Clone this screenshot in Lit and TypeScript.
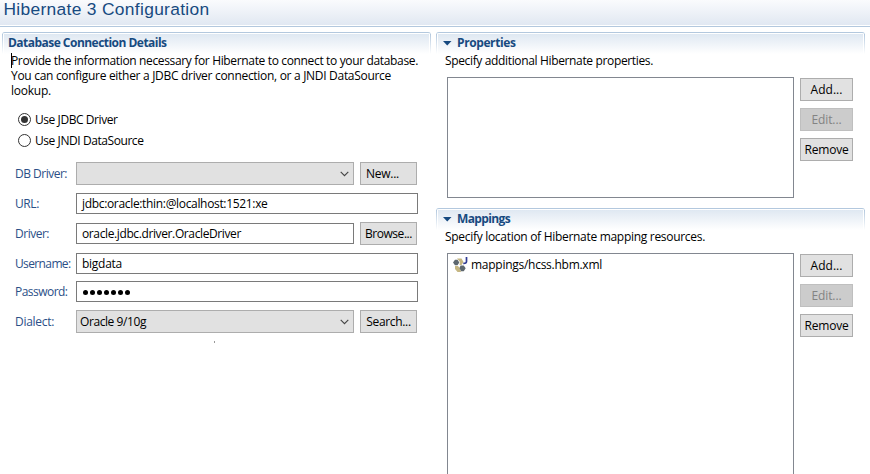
import { LitElement, html, css, nothing } from "lit";
import { customElement, property } from "lit/decorators.js";

/** A single line of text, tracked so that it fills the given width. */
@customElement("fit-text")
class FitText extends LitElement {
  @property({ type: Number }) w = 0;
  @property() text = "";
  static styles = css`
    :host { display: block; white-space: pre; height: 16px; line-height: 16px; flex: none; }
    .t { display: inline-block; vertical-align: top; }
  `;
  render() {
    return html`<span class="t">${this.text}</span>`;
  }
  updated() {
    const span = this.renderRoot.querySelector(".t") as HTMLElement;
    span.style.letterSpacing = "0px";
    const natural = span.getBoundingClientRect().width;
    if (this.w) span.style.letterSpacing = (this.w - natural) / this.text.length + "px";
  }
}

@customElement("push-button")
class PushButton extends LitElement {
  @property() label = "";
  @property({ type: Number }) w = 0;
  @property({ type: Boolean, reflect: true }) disabled = false;
  static styles = css`
    :host { display: flex; justify-content: center; box-sizing: border-box; height: 23px; padding-top: 3px; border: 1px solid #adadad; background: #e1e1e1; color: #000; }
    :host([disabled]) { border-color: #bfbfbf; background: #ccc; color: #838383; }
  `;
  render() {
    return html`<fit-text .text=${this.label} .w=${this.w}></fit-text>`;
  }
}

@customElement("form-section")
class FormSection extends LitElement {
  @property() heading = "";
  @property({ type: Number }) w = 0;
  @property({ type: Boolean }) twistie = false;
  static styles = css`
    :host { display: block; }
    .bar { display: flex; box-sizing: border-box; height: 22px; padding: 2px 0 0 6px; position: relative; border-top: 1px solid #b3c8de; border-radius: 3px 3px 0 0; background: linear-gradient(#fff 0 1px, #dfe8f2 1px, #fff 21px); color: #174a80; font-weight: bold; }
    .bar::before, .bar::after { content: ""; width: 2px; position: absolute; top: 1px; bottom: 0; }
    .bar::before { left: 0; background: linear-gradient(#b3c8de, #fff) 0 0 / 1px 100% no-repeat, #fff; }
    .bar::after { right: 0; background: linear-gradient(#b3c8de, #fff) 1px 0 / 1px 100% no-repeat, #fff; }
    .arrow { width: 9px; height: 5px; margin: 6px 5px 0 1px; fill: #174a80; }
  `;
  render() {
    return html`<div class="bar">
        ${this.twistie ? html`<svg class="arrow" viewBox="0 0 9 5"><path d="M0 0h8.5L4.25 4.5z" /></svg>` : nothing}
        <fit-text .text=${this.heading} .w=${this.w}></fit-text>
      </div>
      <slot></slot>`;
  }
}

const chevron = html`<svg class="chev" viewBox="0 0 9 6"><path d="M.7 .8L4.5 4.6L8.3 .8" /></svg>`;

@customElement("app-root")
class AppRoot extends LitElement {
  static styles = css`
    :host { display: block; height: 474px; overflow: hidden; background: #fff; color: #000; font: 12px "Open Sans", "Noto Sans", sans-serif; }
    .head { box-sizing: border-box; height: 27px; padding: 1px 0 0 3.5px; border-bottom: 1px solid #b3c8de; background: linear-gradient(#fafbfd, #e1e8f2 25px, #fff 25px); color: #174a80; font: 17.4px "Liberation Sans", Arial, sans-serif; }
    .head fit-text { line-height: 17px; height: 17px; }
    .cols { display: grid; grid-template-columns: 429px 429px; column-gap: 5px; padding: 5px 0 0 2px; }
    .desc { padding: 0 0 0 9px; margin-top: -1px; position: relative; }
    .desc fit-text { height: 15px; line-height: 15px; }
    .caret { position: absolute; left: 9px; top: 0; width: 1px; height: 15px; background: #000; }
    .radios { padding: 13px 0 0 16px; }
    .radio { display: flex; height: 21px; gap: 4px; }
    .radio svg { width: 13px; height: 13px; margin-top: 2px; }
    .radio fit-text { margin-top: 1px; }
    .radio svg svg { margin: 0; }
    .ring { fill: #fff; stroke: #333; }
    .dot { fill: #333; }
    .form { display: grid; grid-template-columns: 61px 278px 63px; column-gap: 0; grid-template-rows: 30px 30px 30px 29px 29px 23px; padding: 9px 0 0 13px; }
    .lbl { color: #2b4f87; padding-top: 4px; }
    .lbl.pw { padding-top: 3px; }
    .field { box-sizing: border-box; height: 21px; margin-top: 1px; padding: 2px 0 0 5px; border: 1px solid #7a7a7a; background: #fff; }
    .wide { grid-column: 2 / 4; width: 342px; }
    .pw.field { margin-top: 0; }
    .combo { display: flex; justify-content: space-between; box-sizing: border-box; height: 23px; padding: 3px 4px 0 3px; border: 1px solid #adadad; background: #e1e1e1; }
    .chev { width: 9px; height: 6px; margin-top: 5px; margin-left: auto; fill: none; stroke: #444; stroke-width: 1.1; }
    .form push-button { margin-left: 6px; width: 57px; }
    .form push-button.new { justify-content: flex-start; padding-left: 5px; }
    .bullets { display: flex; gap: 1.6px; padding: 5.5px 0 0 1px; }
    .bullets i { width: 5.4px; height: 5.4px; border-radius: 3px; background: #000; }
    .speck { width: 1px; height: 2px; margin: 8px 0 0 212px; background: #999; }
    .note { padding-left: 9px; margin-top: -1px; }
    .body { display: grid; grid-template-columns: 347px 53px; column-gap: 6px; padding: 8px 0 0 11px; }
    .list { box-sizing: border-box; height: 121px; border: 1px solid #828790; background: #fff; }
    .tall { height: 240px; }
    .btns { display: grid; gap: 7px; align-content: start; padding-top: 1px; }
    .props { height: 176px; }
    .item { display: flex; padding: 3px 0 0 5px; gap: 3px; }
    .item svg { width: 15px; height: 16px; }
  `;

  private radio(label: string, w: number, on: boolean) {
    return html`<div class="radio">
      <svg viewBox="0 0 13 13"><circle class="ring" cx="6.5" cy="6.5" r="6" />${on ? html`<svg viewBox="0 0 13 13"><circle class="dot" cx="6.5" cy="6.5" r="3.5" /></svg>` : nothing}</svg>
      <fit-text .text=${label} .w=${w}></fit-text>
    </div>`;
  }

  private label(text: string, w: number, cls = "") {
    return html`<div class="lbl ${cls}"><fit-text .text=${text} .w=${w}></fit-text></div>`;
  }

  private buttons() {
    return html`<div class="btns">
      <push-button label="Add..." w="32"></push-button>
      <push-button label="Edit..." w="30" disabled></push-button>
      <push-button label="Remove" w="44"></push-button>
    </div>`;
  }

  render() {
    return html`
      <div class="head"><fit-text text="Hibernate 3 Configuration" w="206"></fit-text></div>
      <div class="cols">
        <form-section heading="Database Connection Details" w="158.5">
          <div class="desc">
            <div class="caret"></div>
            <fit-text text="Provide the information necessary for Hibernate to connect to your database." w="407"></fit-text>
            <fit-text text="You can configure either a JDBC driver connection, or a JNDI DataSource" w="380"></fit-text>
            <fit-text text="lookup." w="40"></fit-text>
          </div>
          <div class="radios">
            ${this.radio("Use JDBC Driver", 82.5, true)} ${this.radio("Use JNDI DataSource", 108.5, false)}
          </div>
          <div class="form">
            ${this.label("DB Driver:", 52)}
            <div class="combo">${chevron}</div>
            <push-button class="new" label="New..." w="33"></push-button>
            ${this.label("URL:", 24)}
            <div class="field wide"><fit-text text="jdbc:oracle:thin:@localhost:1521:xe" w="185.5"></fit-text></div>
            ${this.label("Driver:", 34)}
            <div class="field"><fit-text text="oracle.jdbc.driver.OracleDriver" w="159"></fit-text></div>
            <push-button label="Browse..." w="47"></push-button>
            ${this.label("Username:", 55.5)}
            <div class="field wide"><fit-text text="bigdata" w="40"></fit-text></div>
            ${this.label("Password:", 52.5, "pw")}
            <div class="field wide pw"><div class="bullets">${Array.from({ length: 7 }, () => html`<i></i>`)}</div></div>
            ${this.label("Dialect:", 39)}
            <div class="combo"><fit-text text="Oracle 9/10g" w="66"></fit-text>${chevron}</div>
            <push-button label="Search..." w="44.5"></push-button>
          </div>
          <div class="speck"></div>
        </form-section>
        <div>
          <form-section class="props" heading="Properties" w="58.5" twistie>
            <div class="note"><fit-text text="Specify additional Hibernate properties." w="208"></fit-text></div>
            <div class="body"><div class="list"></div>${this.buttons()}</div>
          </form-section>
          <form-section heading="Mappings" w="53" twistie>
            <div class="note"><fit-text text="Specify location of Hibernate mapping resources." w="260"></fit-text></div>
            <div class="body">
              <div class="list tall">
                <div class="item">
                  <svg viewBox="0 0 15 16">
                    <path fill="#c5b682" d="M4 1.5h4.5l2 3.5-2 3H6.5L7 5z" />
                    <path fill="#5d676e" d="M0 5.5l2-2.7h2.5l1.8 2.7-1.8 2.8H2z" />
                    <path fill="#c5b682" d="M2 9h3l2 2.5 1 3.5H4.5L2 12z" />
                    <path fill="#5d676e" d="M7.5 8.5h3.2l2 2.7-2 3H8L6.5 11z" />
                    <path fill="none" stroke="#303b93" stroke-width="1.7" d="M13.5 0v4.5q0 2-3.2 1.8" />
                  </svg>
                  <fit-text text="mappings/hcss.hbm.xml" w="131"></fit-text>
                </div>
              </div>
              ${this.buttons()}
            </div>
          </form-section>
        </div>
      </div>
    `;
  }
}
